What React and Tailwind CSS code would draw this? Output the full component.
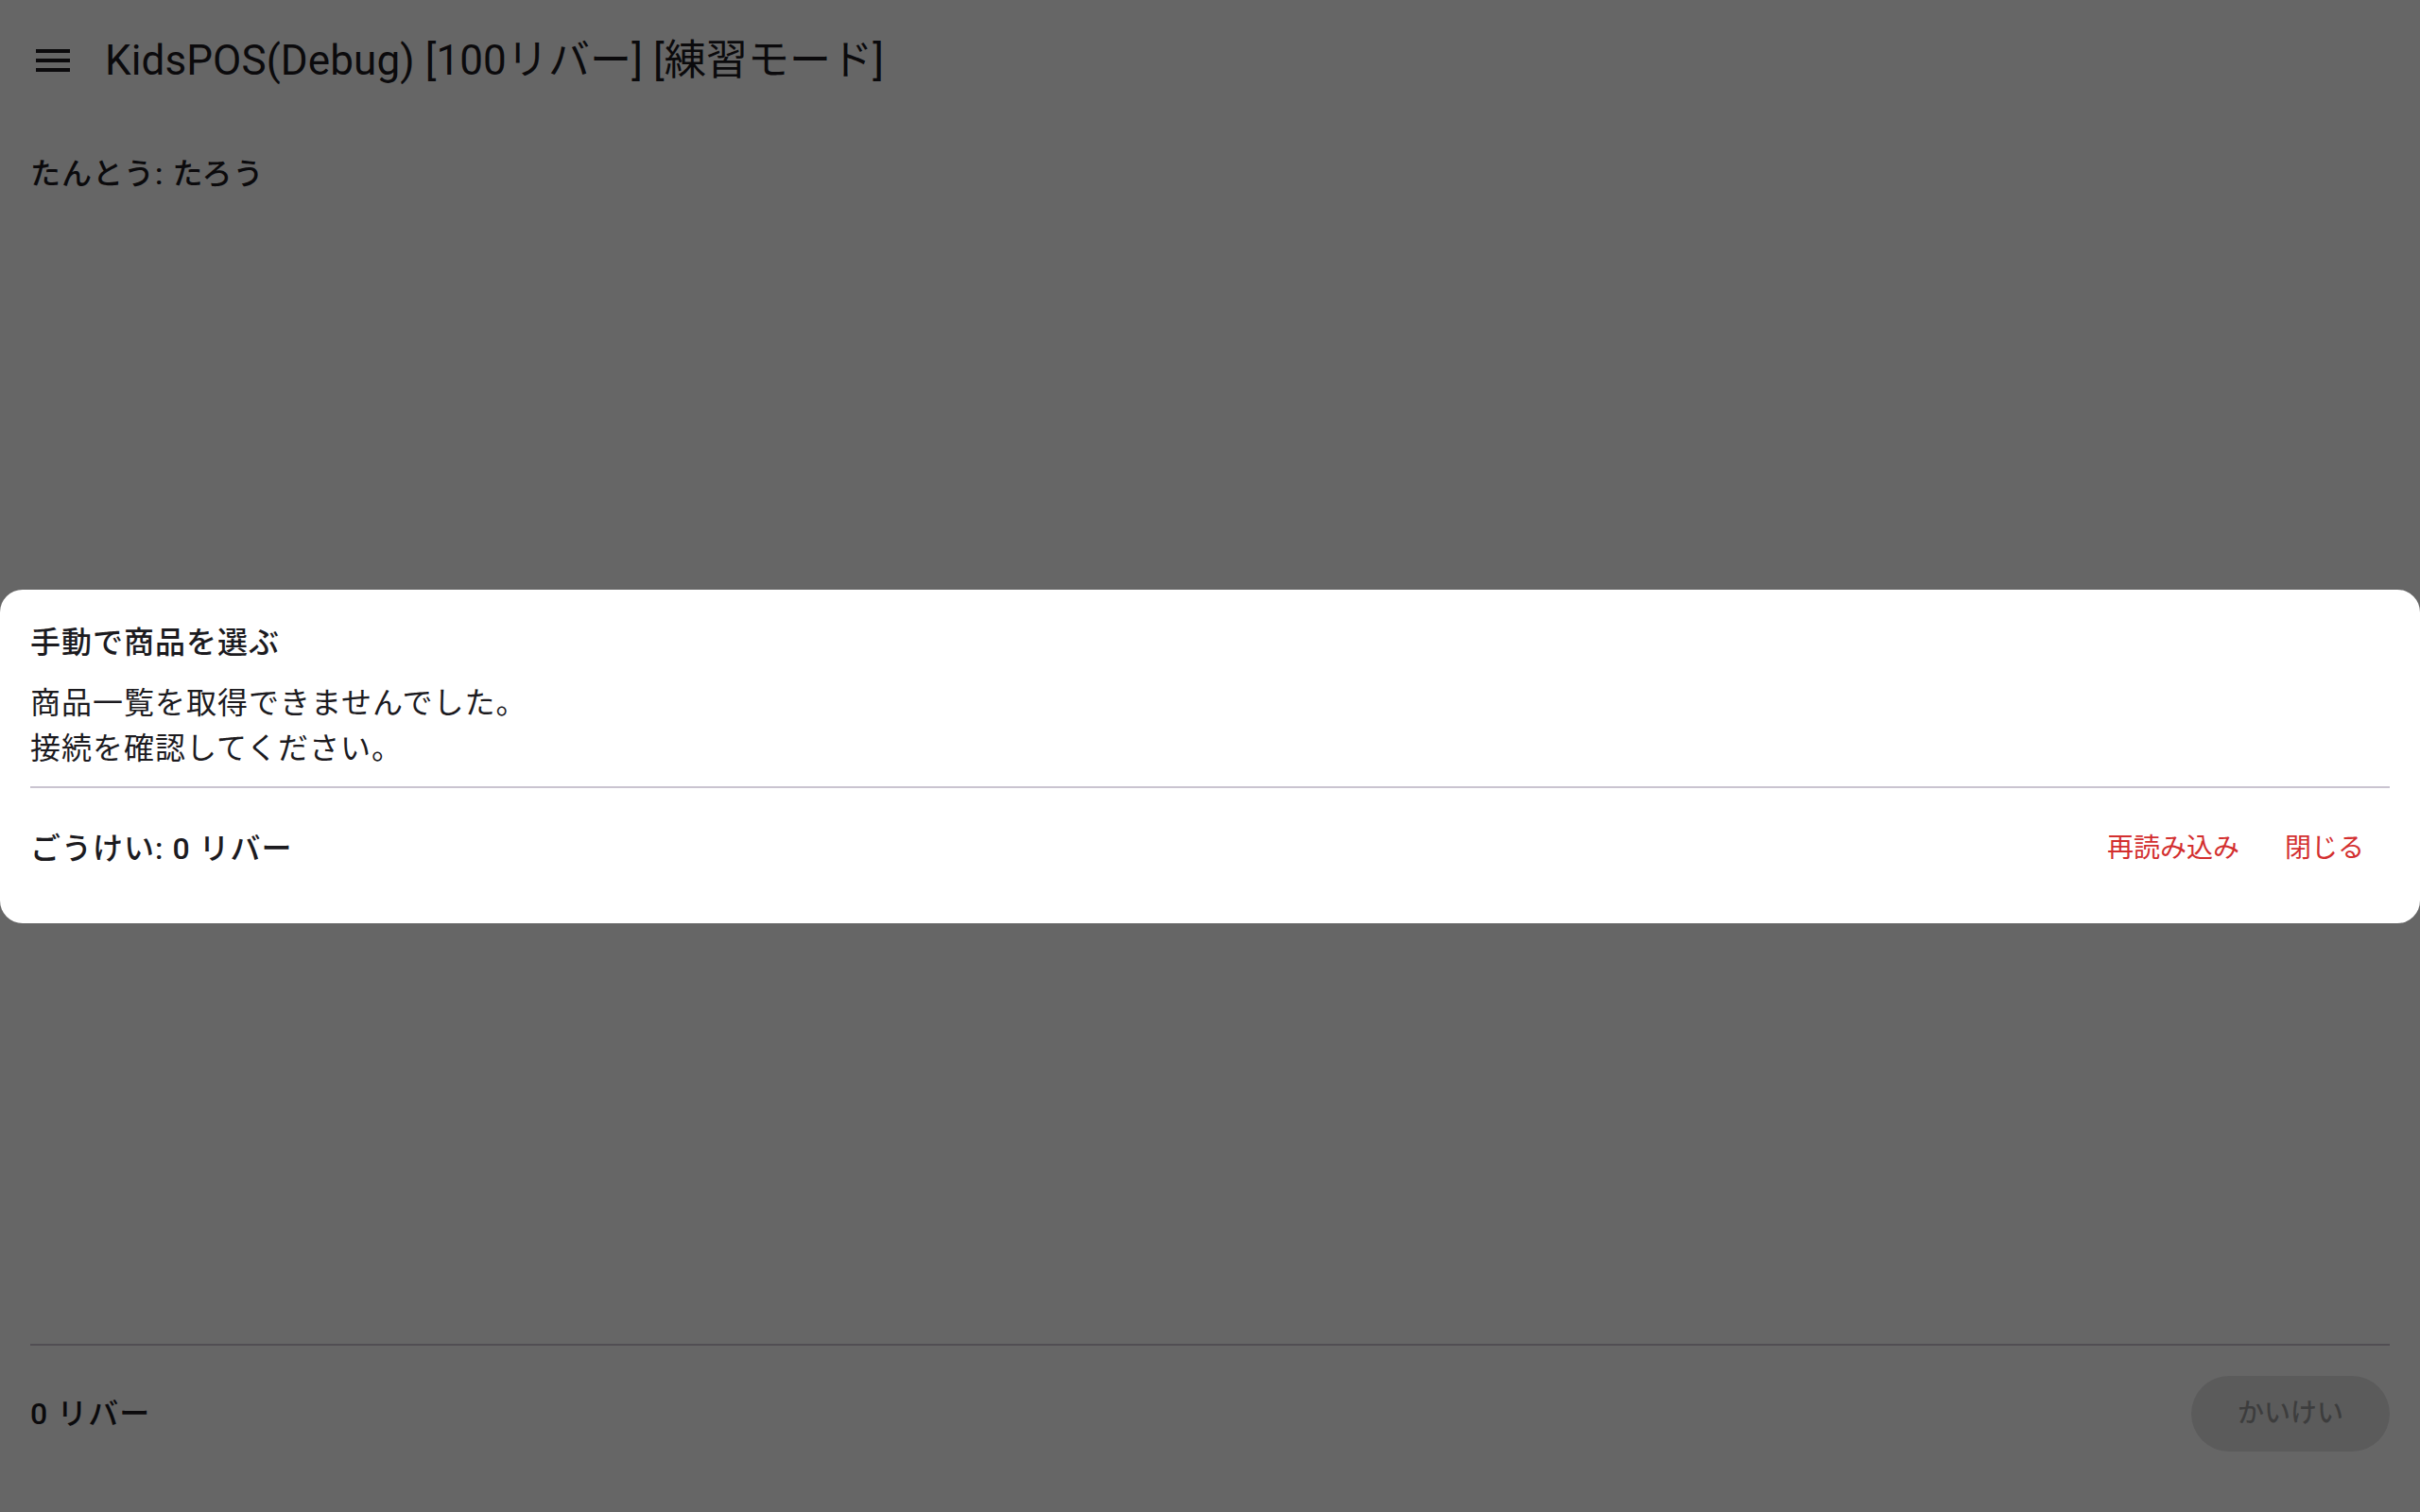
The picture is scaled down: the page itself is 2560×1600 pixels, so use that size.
import React from "react";

const font = { fontFamily: 'Roboto, "Noto Sans CJK JP", sans-serif' };

function MenuIcon() {
  return (
    <svg viewBox="0 0 24 24" className="w-[48px] h-[48px] shrink-0" fill="#1c1b1f">
      <path d="M3 18h18v-2H3v2zm0-5h18v-2H3v2zm0-7v2h18V6H3z" />
    </svg>
  );
}

export default function App() {
  return (
    <div
      className="relative h-[1600px] w-full bg-white text-[#1c1b1f] flex flex-col overflow-hidden"
      style={font}
    >
      {/* top bar */}
      <header className="h-[128px] shrink-0 flex items-center pl-[32px] bg-white">
        <MenuIcon />
        <h1 className="ml-[31px] text-[44px] leading-[56px] font-normal tracking-[0.1px] whitespace-nowrap">
          KidsPOS(Debug) [100リバー] [練習モード]
        </h1>
      </header>

      {/* main */}
      <main className="flex-1 flex flex-col px-[32px]">
        <p className="pt-[32px] text-[32px] leading-[48px] font-medium tracking-[1px]">たんとう: たろう</p>
        <div className="flex-1" />
        <div className="h-[2px] bg-[#cac4d0]" />
        <div className="flex items-center justify-between pt-[32px] pb-[64px]">
          <span className="text-[32px] leading-[48px] font-medium tracking-[1px]">0 リバー</span>
          <button
            disabled
            className="h-[80px] w-[210px] rounded-full bg-[#1c1b1f]/[0.12] text-[#1c1b1f]/[0.38] text-[28px] leading-[40px] font-medium"
          >
            かいけい
          </button>
        </div>
      </main>

      {/* scrim + dialog */}
      <div className="fixed inset-0 bg-black/60 flex items-center">
        <div className="w-full bg-white rounded-[24px] px-[32px] pt-[32px] flex flex-col">
          <h2 className="text-[32px] leading-[48px] font-medium tracking-[1px]">手動で商品を選ぶ</h2>
          <div className="mt-[16px] text-[32px] leading-[48px] font-normal tracking-[1px]">
            <p>商品一覧を取得できませんでした。</p>
            <p>接続を確認してください。</p>
          </div>
          <div className="mt-[16px] h-[2px] bg-[#cac4d0]" />
          <div className="flex items-center justify-between pt-[24px] pb-[39px]">
            <span className="text-[32px] leading-[48px] font-medium tracking-[1px]">ごうけい: 0 リバー</span>
            <div className="flex items-center mr-[3px]">
              <button className="h-[80px] px-[24px] rounded-full text-[#d32f2f] text-[28px] leading-[40px] font-normal">
                再読み込み
              </button>
              <button className="h-[80px] px-[24px] rounded-full text-[#d32f2f] text-[28px] leading-[40px] font-normal">
                閉じる
              </button>
            </div>
          </div>
        </div>
      </div>
    </div>
  );
}
